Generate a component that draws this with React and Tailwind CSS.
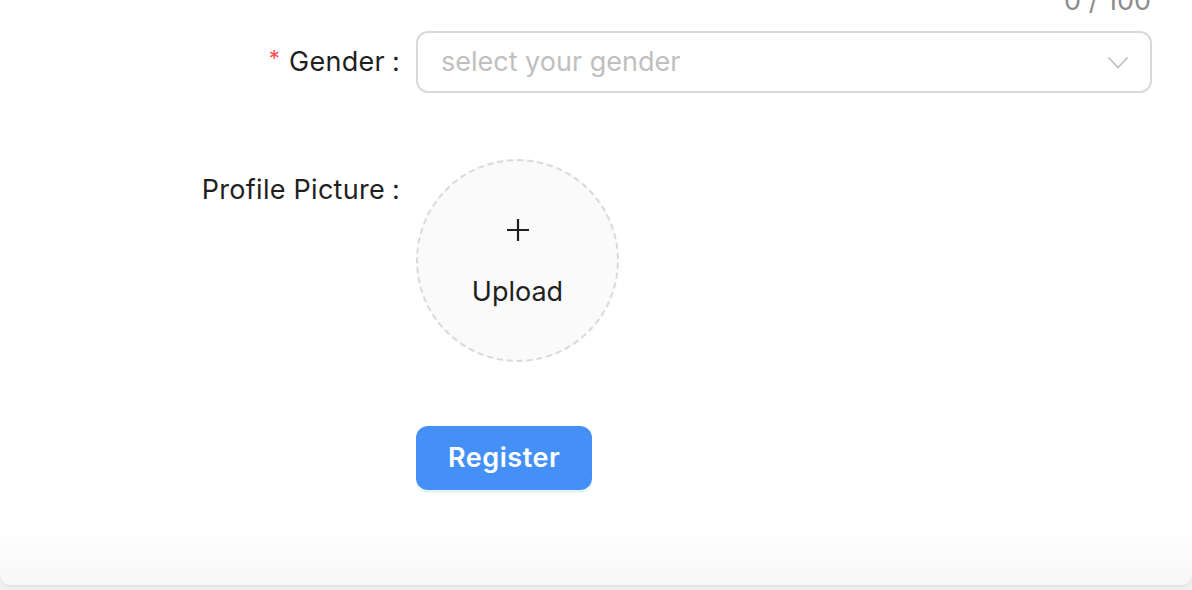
import React, { useState } from 'react';

export default function App() {
    const [gender, setGender] = useState('');

    return (
        <div className="w-[1192px] h-[590px] overflow-hidden bg-[#efefef]" style={{ fontFamily: 'Inter, "Noto Sans", sans-serif' }}>
            <div className="h-[585px] overflow-hidden rounded-b-[10px] bg-gradient-to-b from-white from-[90%] to-[#f7f7f7] shadow-[0_1px_3px_rgba(0,0,0,0.08)]">
                {/* counter of the field above, cut at the top */}
                <div className="flex justify-end pr-[41px] -mt-[15px] h-[46px]">
                    <span className="text-[27px] leading-[32px] text-[#8c8c8c]">0 / 100</span>
                </div>

                <div className="grid grid-cols-[400px_736px] gap-x-[16px]">
                    <div className="flex items-center justify-end h-[62px] text-[27px] tracking-[0.01em] text-[#1f1f1f]">
                        <span className="text-[#ff4d4f] text-[22px] mr-[9px] -mt-[8px]">*</span>
                        <span>Gender</span>
                        <span className="ml-[7px]">:</span>
                    </div>
                    <div className="relative h-[62px] rounded-[12px] border-2 border-[#d9d9d9] bg-white flex items-center pl-[23px] pr-[22px]">
                        <span className="flex-1 text-[27px] text-[#bfbfbf]">{gender || 'select your gender'}</span>
                        <svg width="20" height="12" viewBox="0 0 20 12" fill="none" className="mt-[1px]">
                            <path d="M1 1 L10 10.5 L19 1" stroke="#bfbfbf" strokeWidth="1.8" strokeLinejoin="round" strokeLinecap="round" />
                        </svg>
                    </div>

                    <div className="col-span-2 h-[66px]" />

                    <div className="flex items-center justify-end h-[62px] text-[27px] tracking-[0.01em] text-[#1f1f1f]">
                        <span>Profile Picture</span>
                        <span className="ml-[7px]">:</span>
                    </div>
                    <div>
                        <button
                            onClick={() => setGender('')}
                            className="w-[203px] h-[203px] rounded-full border-2 border-dashed border-[#d9d9d9] bg-[#fafafa] flex flex-col items-center justify-center"
                        >
                            <svg width="24" height="24" viewBox="0 0 24 24" className="mt-[2px]">
                                <path d="M12 1 V23 M1 12 H23" stroke="#1f1f1f" strokeWidth="2.2" />
                            </svg>
                            <span className="mt-[36px] text-[27px] leading-none text-[#1f1f1f]">Upload</span>
                        </button>
                    </div>

                    <div className="col-span-2 h-[64px]" />

                    <div />
                    <div>
                        <button className="h-[64px] px-[32px] rounded-[12px] bg-[#4490f6] text-white text-[27px] tracking-[0.02em] font-semibold shadow-[0_3px_0_rgba(5,145,255,0.1)]">
                            Register
                        </button>
                    </div>
                </div>
            </div>
        </div>
    );
}
